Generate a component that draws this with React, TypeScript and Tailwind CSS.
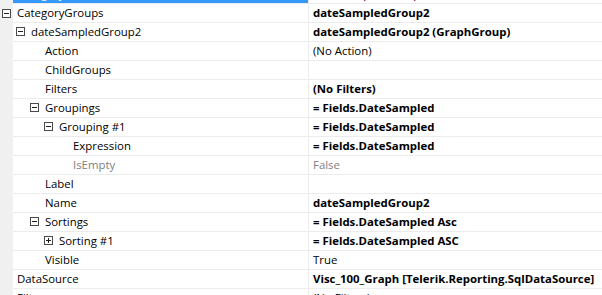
import React from 'react';

type Row = {
  level: number;
  name: string;
  value: string;
  bold?: boolean;
  expander?: 'minus' | 'plus';
  gray?: boolean;
  selected?: boolean;
};

const rows: Row[] = [
  { level: 0, name: 'Category', value: '(dateSampledGroup2)', selected: true },
  { level: 0, name: 'CategoryGroups', value: 'dateSampledGroup2', bold: true, expander: 'minus' },
  { level: 1, name: 'dateSampledGroup2', value: 'dateSampledGroup2 (GraphGroup)', bold: true, expander: 'minus' },
  { level: 2, name: 'Action', value: '(No Action)' },
  { level: 2, name: 'ChildGroups', value: '' },
  { level: 2, name: 'Filters', value: '(No Filters)', bold: true },
  { level: 2, name: 'Groupings', value: '= Fields.DateSampled', bold: true, expander: 'minus' },
  { level: 3, name: 'Grouping #1', value: '= Fields.DateSampled', bold: true, expander: 'minus' },
  { level: 4, name: 'Expression', value: '= Fields.DateSampled', bold: true },
  { level: 4, name: 'IsEmpty', value: 'False', gray: true },
  { level: 2, name: 'Label', value: '' },
  { level: 2, name: 'Name', value: 'dateSampledGroup2', bold: true },
  { level: 2, name: 'Sortings', value: '= Fields.DateSampled Asc', bold: true, expander: 'minus' },
  { level: 3, name: 'Sorting #1', value: '= Fields.DateSampled ASC', bold: true, expander: 'plus' },
  { level: 2, name: 'Visible', value: 'True' },
  { level: 0, name: 'DataSource', value: 'Visc_100_Graph [Telerik.Reporting.SqlDataSource]', bold: true },
  { level: 0, name: 'Filters', value: '(No Filters)' },
];

function Expander({ kind }: { kind: 'minus' | 'plus' }) {
  return (
    <span className="flex h-[9px] w-[9px] items-center justify-center border border-[#4a4a4a] bg-white">
      <svg width="7" height="7" viewBox="0 0 7 7">
        <rect x="1" y="3" width="5" height="1" fill="#222" />
        {kind === 'plus' && <rect x="3" y="1" width="1" height="5" fill="#222" />}
      </svg>
    </span>
  );
}

export default function App() {
  return (
    <div
      className="h-[295px] w-[602px] overflow-hidden whitespace-nowrap bg-white text-[11.4px] text-black"
      style={{ fontFamily: '"Open Sans", "Noto Sans", sans-serif' }}
    >
      <div className="-mt-[15px] flex flex-col">
        {rows.map((r, i) => (
          <div key={i} className="flex h-[19px]">
            <div className="flex w-[13px] shrink-0 items-center justify-center bg-[#f0f0f0] pb-px">
              {r.level === 0 && r.expander && <Expander kind={r.expander} />}
            </div>
            <div
              className={`flex w-[295px] shrink-0 items-center border-b border-[#ececec] pb-px ${
                r.selected ? 'bg-[#3399ff] text-white' : ''
              }`}
            >
              <div className="flex items-center" style={{ paddingLeft: Math.max(0, 14 * r.level - 11) }}>
                {r.level > 0 && (
                  <span className="flex w-[15px] items-center">{r.expander && <Expander kind={r.expander} />}</span>
                )}
                <span className={`${r.level === 0 ? 'pl-1' : ''} leading-none ${r.gray ? 'text-[#808080]' : ''}`}>
                  {r.name}
                </span>
              </div>
            </div>
            <div className="flex min-w-0 flex-1 items-center border-b border-l border-[#ececec] pb-px pl-[4px]">
              <span className={`leading-none ${r.bold ? 'font-bold' : ''} ${r.gray ? 'text-[#808080]' : ''}`}>
                {r.value}
              </span>
            </div>
          </div>
        ))}
      </div>
    </div>
  );
}
